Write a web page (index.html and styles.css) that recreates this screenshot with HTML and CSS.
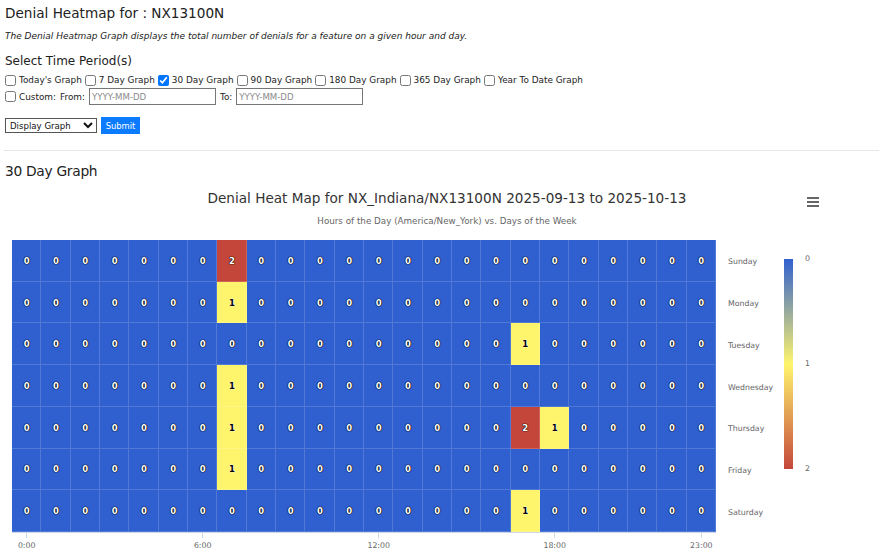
FILE: index.html
```html
<!DOCTYPE html>
<html lang="en">
<head>
    <meta charset="UTF-8">
    <title>Denial Heatmap</title>
    <link rel="stylesheet" href="styles.css">
</head>
<body>

    <!-- Header and period selection -->
    <h1 class="page-title">Denial Heatmap for : NX13100N</h1>
    <p class="intro">The Denial Heatmap Graph displays the total number of denials for a feature on a given hour and day.</p>

    <h2 class="section-title">Select Time Period(s)</h2>
    <div class="periods">
        <label><input type="checkbox">Today's Graph</label>
        <label><input type="checkbox">7 Day Graph</label>
        <label><input type="checkbox" checked>30 Day Graph</label>
        <label><input type="checkbox">90 Day Graph</label>
        <label><input type="checkbox">180 Day Graph</label>
        <label><input type="checkbox">365 Day Graph</label>
        <label><input type="checkbox">Year To Date Graph</label>
    </div>
    <div class="custom-row">
        <label><input type="checkbox">Custom:</label>
        <span>From:</span>
        <input type="text" class="date-input" placeholder="YYYY-MM-DD">
        <span>To:</span>
        <input type="text" class="date-input" placeholder="YYYY-MM-DD">
    </div>
    <div class="actions">
        <select class="mode-select">
            <option>Display Graph</option>
        </select>
        <button class="submit-btn">Submit</button>
    </div>

    <hr class="divider">

    <!-- Chart -->
    <h2 class="graph-title">30 Day Graph</h2>
    <div class="chart">
        <div class="chart-title">Denial Heat Map for NX_Indiana/NX13100N 2025-09-13 to 2025-10-13</div>
        <div class="chart-subtitle">Hours of the Day (America/New_York) vs. Days of the Week</div>
        <button class="chart-menu" aria-label="Chart menu">
            <svg width="12" height="10" viewBox="0 0 12 10">
                <rect x="0" y="0" width="12" height="2" fill="#666"/>
                <rect x="0" y="4" width="12" height="2" fill="#666"/>
                <rect x="0" y="8" width="12" height="2" fill="#666"/>
            </svg>
        </button>

        <div class="chart-body">
            <div class="plot">
                <div class="grid" id="grid"></div>
                <div class="x-axis" id="xAxis"></div>
            </div>
            <div class="y-axis">
                <span>Sunday</span>
                <span>Monday</span>
                <span>Tuesday</span>
                <span>Wednesday</span>
                <span>Thursday</span>
                <span>Friday</span>
                <span>Saturday</span>
            </div>
            <div class="legend">
                <div class="legend-bar"></div>
                <div class="legend-labels">
                    <span>0</span>
                    <span>1</span>
                    <span>2</span>
                </div>
            </div>
        </div>
    </div>

    <script>
        // denials per day (Sunday..Saturday) keyed by hour
        const denials = [
            { 7: 2 },
            { 7: 1 },
            { 17: 1 },
            { 7: 1 },
            { 7: 1, 17: 2, 18: 1 },
            { 7: 1 },
            { 17: 1 }
        ];
        const levels = ['low', 'mid', 'high'];

        const grid = document.getElementById('grid');
        denials.forEach(day => {
            for (let hour = 0; hour < 24; hour++) {
                const value = day[hour] || 0;
                const cell = document.createElement('div');
                cell.className = 'cell ' + levels[value];
                cell.textContent = value;
                grid.appendChild(cell);
            }
        });

        // x axis ticks
        const xAxis = document.getElementById('xAxis');
        const labelled = [0, 6, 12, 18, 23];
        for (let hour = 0; hour < 24; hour++) {
            const tick = document.createElement('span');
            if (labelled.includes(hour)) {
                tick.className = 'tick';
                tick.textContent = hour + ':00';
            }
            xAxis.appendChild(tick);
        }
    </script>
</body>
</html>
```

FILE: styles.css
```css
/* Reset */
* {
    margin: 0;
    padding: 0;
    box-sizing: border-box;
}

body {
    font-family: "DejaVu Sans", Verdana, sans-serif;
    color: #222;
    background-color: #fff;
    padding: 6px 0 0 5px;
    width: 879px;
    overflow: hidden;
}

/* Headings */
.page-title {
    font-size: 13.6px;
    font-weight: normal;
    line-height: 15px;
}

.intro {
    font-size: 9px;
    font-style: italic;
    line-height: 11px;
    margin-top: 10px;
}

.section-title {
    font-size: 12px;
    font-weight: normal;
    line-height: 14px;
    margin-top: 12px;
}

/* Period checkboxes */
.periods,
.custom-row {
    display: flex;
    align-items: center;
    font-size: 8.9px;
}

.periods {
    gap: 3px;
    margin-top: 5px;
    height: 14px;
}

.periods label,
.custom-row label {
    display: flex;
    align-items: center;
}

input[type="checkbox"] {
    width: 11px;
    height: 11px;
    margin: 0 3px 0 0;
}

.custom-row {
    gap: 4px;
    margin-top: 1px;
    height: 17px;
}

.date-input {
    width: 127px;
    height: 17px;
    border: 1px solid #767676;
    padding: 0 2px;
    font-family: inherit;
    font-size: 8.6px;
}

.date-input::placeholder {
    color: #8a8a8a;
}

/* Select + submit */
.actions {
    display: flex;
    align-items: center;
    gap: 4px;
    margin-top: 12px;
    height: 17px;
}

.mode-select {
    width: 92px;
    height: 15px;
    font-family: inherit;
    font-size: 8.6px;
    border: 1px solid #555;
    border-radius: 0;
    background-color: #fff;
    color: #111;
}

.submit-btn {
    width: 39px;
    height: 17px;
    background-color: #0b7bff;
    color: #fff;
    border: none;
    font-family: inherit;
    font-size: 8.4px;
}

.divider {
    border: none;
    border-top: 1px solid #e6e6e6;
    margin: 16px 0 0 -1px;
}

.graph-title {
    font-size: 13.8px;
    font-weight: normal;
    letter-spacing: -0.3px;
    line-height: 17px;
    margin-top: 12px;
}

/* Chart */
.chart {
    position: relative;
    margin-top: 10px;
    padding-left: 7px;
    color: #333;
}

.chart-title {
    font-size: 13.6px;
    line-height: 17px;
    text-align: center;
    width: 869px;
    padding-left: 1px;
}

.chart-subtitle {
    font-size: 8.75px;
    line-height: 11px;
    color: #666;
    text-align: center;
    width: 869px;
    padding-left: 1px;
    margin-top: 9px;
}

.chart-menu {
    position: absolute;
    left: 802px;
    top: 7px;
    border: none;
    background: none;
    line-height: 0;
}

.chart-body {
    display: flex;
    margin-top: 13px;
}

.plot {
    width: 704px;
}

.grid {
    display: grid;
    grid-template-columns: repeat(24, 1fr);
    grid-template-rows: repeat(7, 1fr);
    height: 293px;
    border-bottom: 1px solid #ccd6eb;
}

.cell {
    display: flex;
    align-items: center;
    justify-content: center;
    font-size: 8.5px;
    font-weight: bold;
    box-shadow: inset -1px -1px 0 rgba(255, 255, 255, 0.16);
    color: #fff;
    text-shadow: 0 0 1px #000, 0 0 1px #000, 0 0 1px #000;
}

.cell.low {
    background-color: #3060cf;
}

.cell.mid {
    background-color: #fff56d;
    color: #000;
    text-shadow: 0 0 1px #fff, 0 0 1px #fff, 0 0 1px #fff;
}

.cell.high {
    background-color: #c4463a;
}

/* x axis */
.x-axis {
    display: grid;
    grid-template-columns: repeat(24, 1fr);
    font-size: 7.8px;
    color: #666;
}

.x-axis span {
    text-align: center;
    white-space: nowrap;
}

.x-axis .tick {
    display: flex;
    flex-direction: column;
    align-items: center;
}

.x-axis .tick::before {
    content: "";
    width: 1px;
    height: 5px;
    background-color: #ccd6eb;
    margin-bottom: 3px;
}

/* y axis labels */
.y-axis {
    display: flex;
    flex-direction: column;
    width: 56px;
    height: 293px;
    margin-left: 12px;
    font-size: 7.8px;
    color: #666;
}

.y-axis span {
    flex: 1;
    display: flex;
    align-items: center;
    padding-top: 1px;
}

/* Color axis legend */
.legend {
    display: flex;
    margin-top: 14px;
    height: 220px;
}

.legend-bar {
    width: 9px;
    height: 210px;
    margin-top: 5px;
    background: linear-gradient(#3060cf, #fff56d 50%, #c4463a);
}

.legend-labels {
    display: flex;
    flex-direction: column;
    justify-content: space-between;
    margin-left: 12px;
    font-size: 7.8px;
    line-height: 10px;
    color: #666;
}
```
